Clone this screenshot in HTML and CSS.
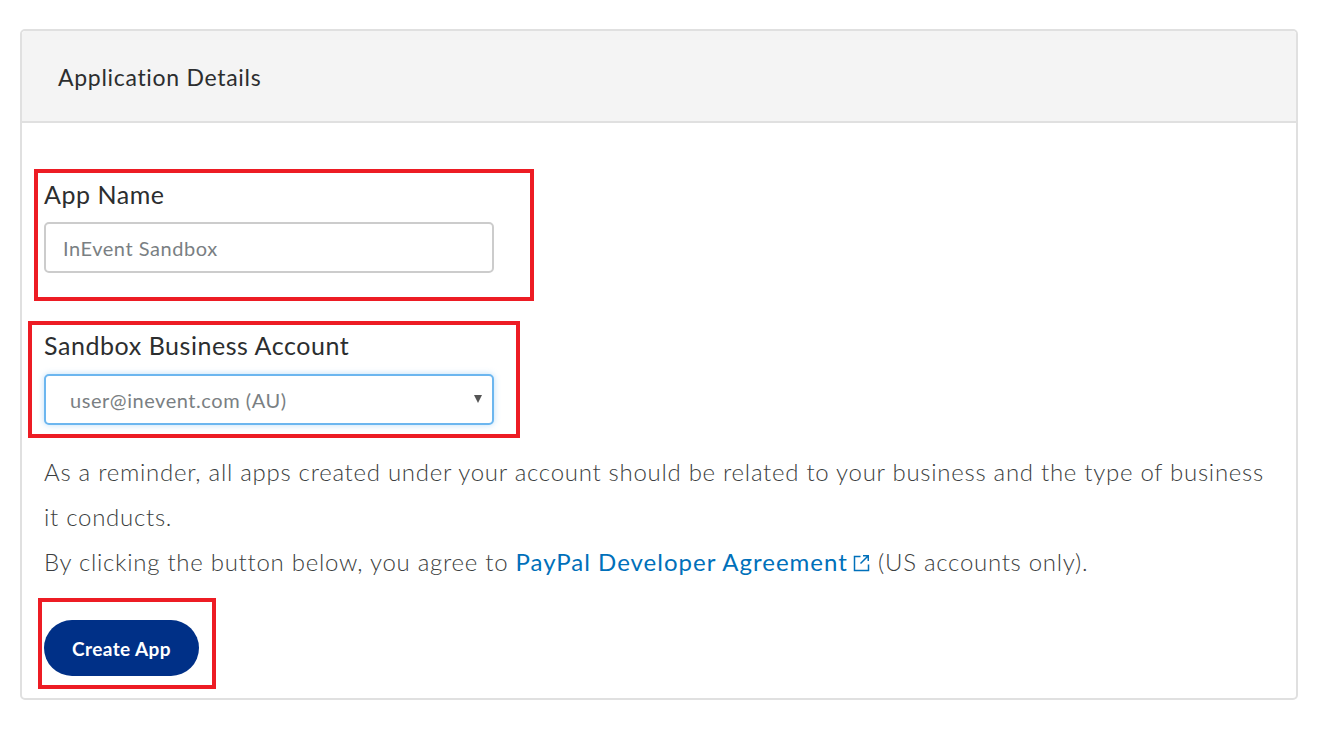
FILE: index.html
```html
<!DOCTYPE html>
<html lang="en">
<head>
<meta charset="utf-8">
<title>Application Details</title>
<link rel="stylesheet" href="styles.css">
</head>
<body>
<div class="page">
  <section class="card">
    <header class="card-header">
      <h2 class="card-title">Application Details</h2>
    </header>
    <div class="card-body">
      <div class="field field-name">
        <label class="field-label" for="appName">App Name</label>
        <input class="text-input" id="appName" type="text" value="InEvent Sandbox">
        <div class="mark mark-name"></div>
      </div>
      <div class="field field-account">
        <label class="field-label" for="account">Sandbox Business Account</label>
        <div class="select" id="account">
          <span class="select-value">user@inevent.com (AU)</span>
          <span class="select-arrow"></span>
        </div>
        <div class="mark mark-account"></div>
      </div>
      <div class="notice">
        <p>As a reminder, all apps created under your account should be related to your business and the type of business it conducts.</p>
        <p>By clicking the button below, you agree to <a class="link" href="#">PayPal Developer Agreement</a><svg class="ext-icon" viewBox="0 0 20 20" width="20" height="20" aria-hidden="true"><path d="M9.5 3.5H3.5v14h14v-6" fill="none" stroke="#0070ba" stroke-width="1.5"/><path d="M12 2.75h5.25V8M17.25 2.75 9.5 10.5" fill="none" stroke="#0070ba" stroke-width="1.5"/></svg> (US accounts only).</p>
      </div>
      <div class="actions">
        <button class="btn-primary" type="button">Create App</button>
        <div class="mark mark-button"></div>
      </div>
    </div>
  </section>
</div>
</body>
</html>
```

FILE: styles.css
```css
html, body {
  margin: 0;
  padding: 0;
  background: #ffffff;
}

body {
  font-family: Lato, "Open Sans", "Liberation Sans", sans-serif;
  color: #2c2e2f;
}

.page {
  padding: 29px 28px 0 20px;
}

.card {
  width: 1274px;
  border: 2px solid #e0e0e0;
  border-radius: 5px;
  background: #ffffff;
}

.card-header {
  background: #f4f4f4;
  border-bottom: 2px solid #e0e0e0;
  border-radius: 4px 4px 0 0;
  height: 92px;
  display: flex;
  align-items: center;
  padding: 2px 0 0 36px;
  box-sizing: border-box;
}

.card-title {
  margin: 0;
  font-size: 23px;
  font-weight: 400;
  letter-spacing: 0.7px;
  color: #2c2e2f;
}

.card-body {
  padding: 56px 22px 22px 22px;
  display: flex;
  flex-direction: column;
  align-items: flex-start;
}

.field {
  position: relative;
  display: flex;
  flex-direction: column;
}

.field-label {
  font-size: 25px;
  line-height: 30px;
  font-weight: 400;
  letter-spacing: 0.55px;
  color: #2c2e2f;
  margin-bottom: 13px;
}

.text-input,
.select {
  box-sizing: border-box;
  width: 450px;
  height: 51px;
  border-radius: 5px;
  font-family: inherit;
  font-size: 20px;
  letter-spacing: 0.55px;
  color: #7a7f83;
  background: #ffffff;
}

.text-input {
  border: 2px solid #cccccc;
  padding: 0 17px;
  outline: none;
}

.field-account {
  margin-top: 57px;
}

.field-account .field-label {
  margin-bottom: 14px;
}

.select {
  border: 2px solid #6cb6ef;
  box-shadow: 0 0 6px rgba(108, 182, 239, 0.45);
  display: flex;
  align-items: center;
  justify-content: space-between;
  padding: 0 10px 0 24px;
}

.select-arrow {
  width: 0;
  height: 0;
  border-left: 4.5px solid transparent;
  border-right: 4.5px solid transparent;
  border-top: 8px solid #555555;
  margin-top: -2px;
}

.notice {
  margin-top: 24px;
  width: 1232px;
  font-size: 24px;
  line-height: 45px;
  font-weight: 300;
  letter-spacing: 0.72px;
  color: #3b3e40;
}

.notice p {
  margin: 0;
}

.link {
  color: #0070ba;
  text-decoration: none;
  font-weight: 400;
  letter-spacing: 1px;
}

.ext-icon {
  display: inline-block;
  vertical-align: -2px;
  margin-left: 3px;
}

.actions {
  position: relative;
  margin-top: 36px;
  display: flex;
}

.btn-primary {
  height: 56px;
  width: 155px;
  border: 0;
  border-radius: 28px;
  background: #003087;
  color: #ffffff;
  font-family: inherit;
  font-size: 19px;
  font-weight: 700;
  letter-spacing: 0.4px;
  cursor: pointer;
}

.mark {
  position: absolute;
  border: 4px solid #ed1c24;
  pointer-events: none;
}

.mark-name {
  left: -10px;
  right: -40px;
  top: -10px;
  bottom: -28px;
}

.mark-account {
  left: -16px;
  right: -26px;
  top: -9px;
  bottom: -13px;
}

.mark-button {
  left: -6px;
  right: -17px;
  top: -22px;
  bottom: -13px;
}
```
